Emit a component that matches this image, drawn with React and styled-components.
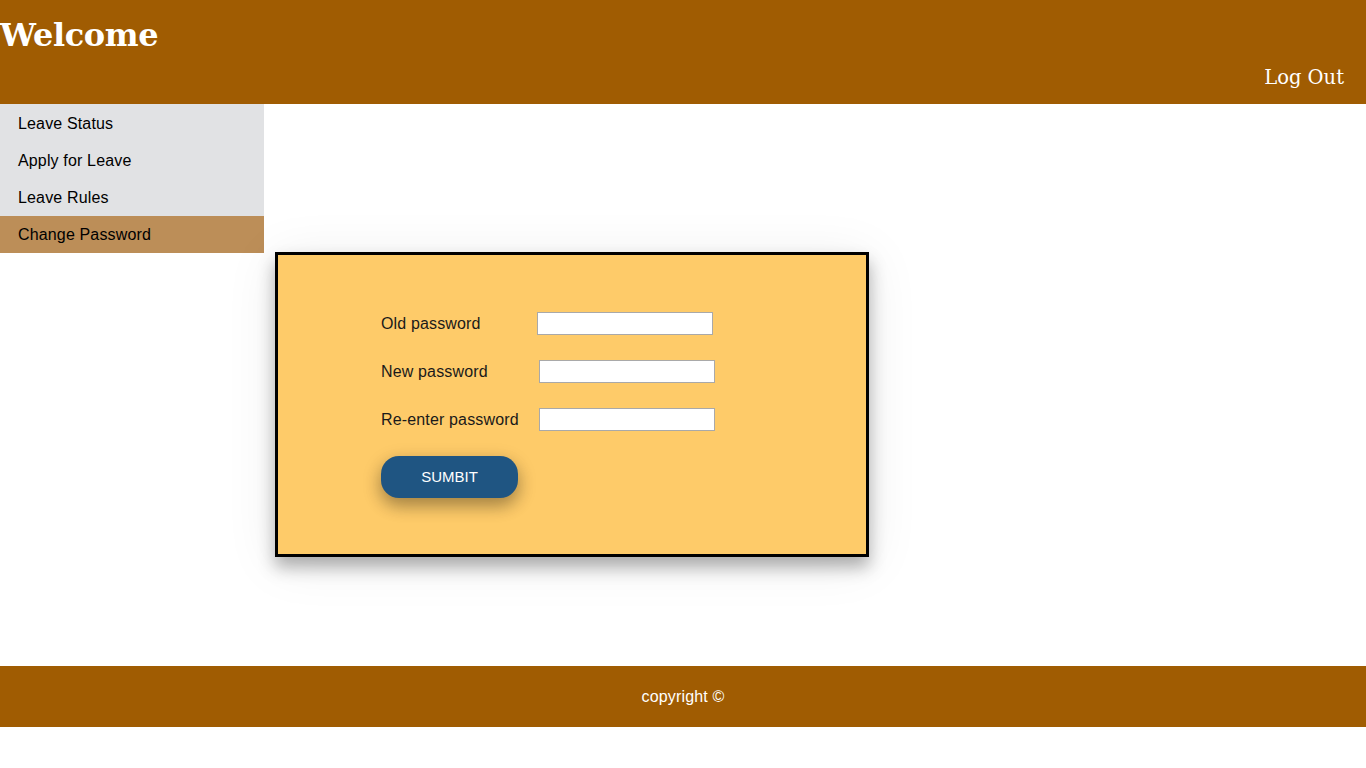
import React from "react";
import styled, { createGlobalStyle } from "styled-components";

const Global = createGlobalStyle`
  html, body { margin: 0; padding: 0; background: #fff; }
  body { font-family: "Liberation Sans", Arial, sans-serif; }
  * { box-sizing: border-box; }
`;

const Header = styled.header`
  height: 104px;
  background: #a05c02;
  color: #fff;
  display: flex;
  flex-direction: column;
  justify-content: space-between;
  padding: 0 22px 14px 0;
`;

const Title = styled.h1`
  margin: 0;
  padding-top: 15px;
  font-family: "DejaVu Serif", Georgia, serif;
  font-weight: bold;
  font-size: 32px;
  line-height: 40px;
  letter-spacing: -0.4px;
`;

const LogOut = styled.a`
  align-self: flex-end;
  font-family: "DejaVu Serif", Georgia, serif;
  font-size: 19.5px;
  line-height: 24px;
  color: #fff;
  text-decoration: none;
  cursor: pointer;
`;

const Main = styled.div`
  display: grid;
  grid-template-columns: 264px 1fr;
  height: 562px;
`;

const Side = styled.nav`
  align-self: start;
  display: flex;
  flex-direction: column;
  background: #e1e2e4;
`;

const NavItem = styled.a`
  display: block;
  height: 37px;
  margin-top: ${(p) => (p.$active ? "1px" : "0")};
  line-height: ${(p) => (p.$active ? "37px" : "39px")};
  padding-left: 18px;
  font-size: 16px;
  letter-spacing: 0.15px;
  color: #000;
  background: ${(p) => (p.$active ? "#bc8e58" : "transparent")};
  cursor: pointer;
`;

const Content = styled.section`
  padding: 148px 0 0 11px;
`;

const Card = styled.div`
  width: 594px;
  height: 305px;
  background: #fecb69;
  border: 3px solid #000;
  box-shadow: 0 10px 16px 0 rgba(0, 0, 0, 0.3), 0 6px 50px 0 rgba(0, 0, 0, 0.08);
  padding: 57px 0 0 103px;
  display: flex;
  flex-direction: column;
  gap: 25px;
`;

const Row = styled.label`
  display: grid;
  grid-template-columns: ${(p) => p.$labelW}px 176px;
  align-items: center;
  height: 23px;
  font-size: 16px;
  letter-spacing: 0.15px;
  color: #1a1a1a;
`;

const Input = styled.input`
  width: 176px;
  height: 23px;
  border: 1px solid #a9a9a9;
  background: #fff;
  padding: 1px 2px;
  font-size: 13px;
  outline: none;
`;

const Button = styled.button`
  width: 137px;
  height: 42px;
  border: none;
  border-radius: 18px;
  background: #1f5582;
  color: #fff;
  font-family: "Liberation Sans", Arial, sans-serif;
  font-size: 15px;
  padding-top: 0;
  box-shadow: 0 8px 16px 0 rgba(0, 0, 0, 0.22), 0 6px 20px 0 rgba(0, 0, 0, 0.19);
  cursor: pointer;
`;

const Footer = styled.footer`
  height: 61px;
  background: #a05c02;
  color: #fff;
  display: flex;
  align-items: center;
  justify-content: center;
  font-size: 16px;
  letter-spacing: 0.15px;
`;

export default function App() {
  return (
    <>
      <Global />
      <Header>
        <Title>Welcome</Title>
        <LogOut>Log Out</LogOut>
      </Header>
      <Main>
        <Side>
          <NavItem>Leave Status</NavItem>
          <NavItem>Apply for Leave</NavItem>
          <NavItem>Leave Rules</NavItem>
          <NavItem $active>Change Password</NavItem>
        </Side>
        <Content>
          <Card>
            <Row $labelW={156}>
              Old password
              <Input type="password" />
            </Row>
            <Row $labelW={158}>
              New password
              <Input type="password" />
            </Row>
            <Row $labelW={158}>
              Re-enter password
              <Input type="password" />
            </Row>
            <Button>SUMBIT</Button>
          </Card>
        </Content>
      </Main>
      <Footer>copyright ©</Footer>
    </>
  );
}
